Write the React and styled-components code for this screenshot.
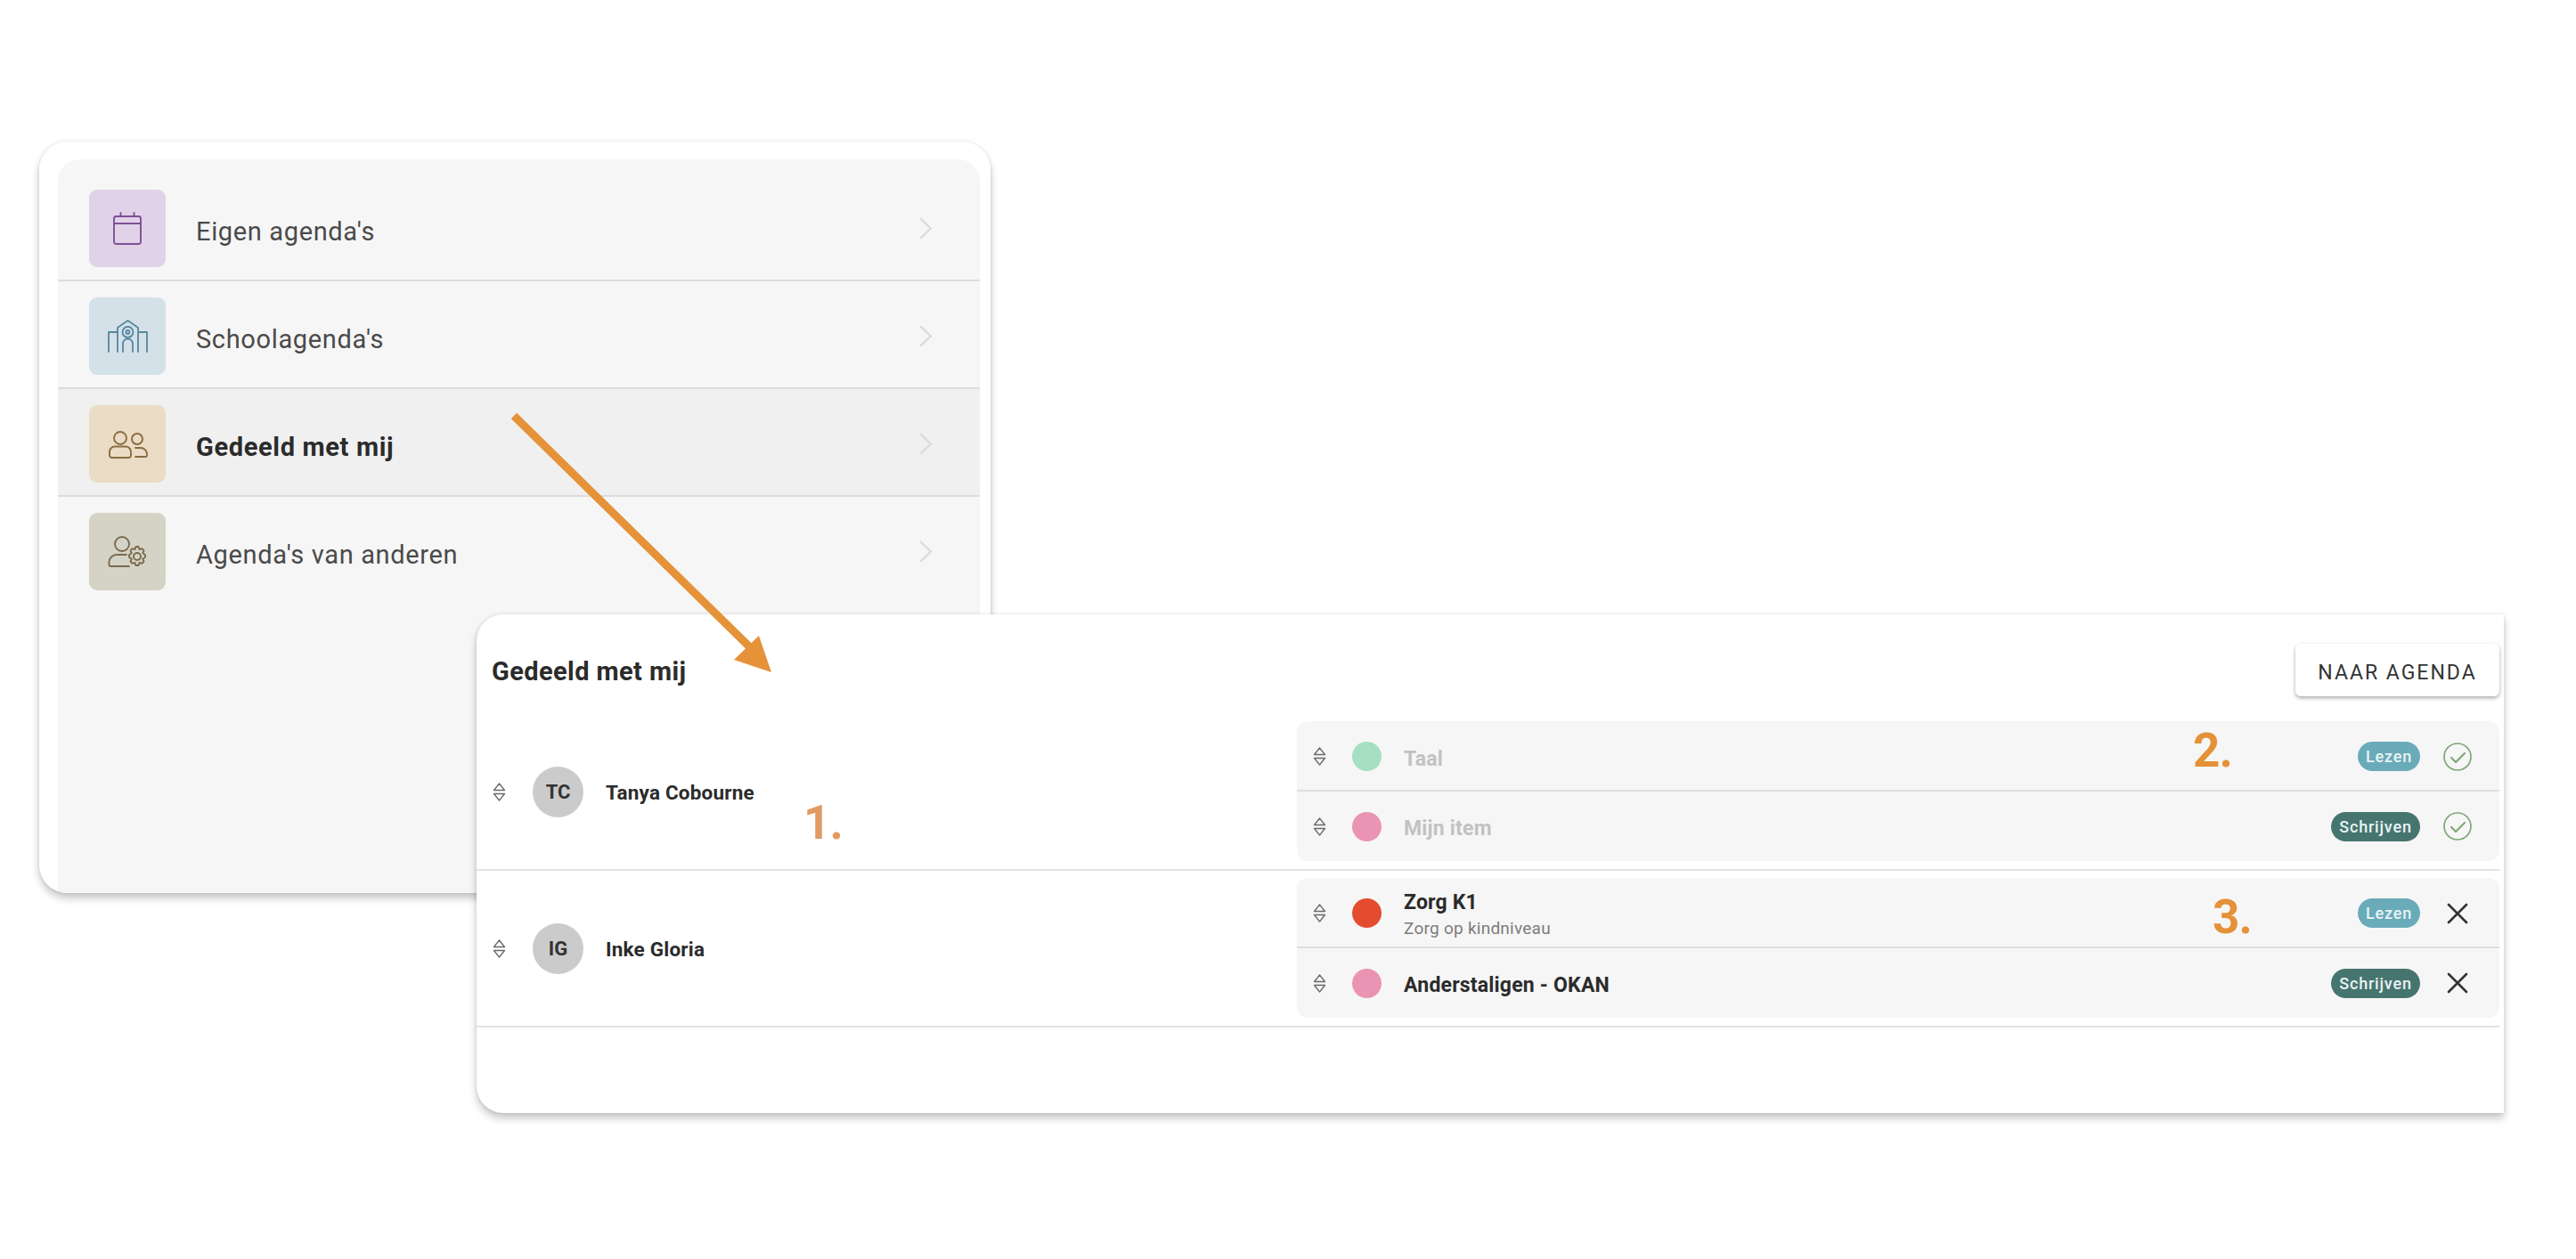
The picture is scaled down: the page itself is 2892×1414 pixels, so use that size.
import React from "react";
import styled, { createGlobalStyle } from "styled-components";

const Global = createGlobalStyle`
  html, body { margin: 0; padding: 0; background: #fff; }
  body { font-family: Roboto, "Liberation Sans", sans-serif; color: #2b2b2b; }
`;

const Canvas = styled.div`
  position: relative;
  width: 2892px;
  height: 1414px;
  overflow: hidden;
  background: #fff;
  padding: 159px 0 0 44px;
  box-sizing: border-box;
`;

const MenuCard = styled.section`
  width: 1068px;
  height: 844px;
  box-sizing: border-box;
  padding: 20px 12px 0 21px;
  background: #fff;
  border-radius: 32px;
  overflow: hidden;
`;

const MenuShadow = styled.div`
  width: 1068px;
  border-radius: 32px;
  box-shadow: 0 6px 10px rgba(0, 0, 0, 0.22), 0 0 4px rgba(0, 0, 0, 0.1);
`;

const MenuPanel = styled.ul`
  list-style: none;
  margin: 0;
  padding: 0;
  height: 100%;
  background: #f6f6f6;
  border-radius: 24px 24px 0 0;
`;

const MenuRow = styled.li`
  display: flex;
  align-items: center;
  box-sizing: border-box;
  padding: ${(p) => (p.$first ? "34px" : "18px")} 53px 14px 35px;
  border-bottom: ${(p) => (p.$last ? "none" : "2px solid #dcdcdc")};
  background: ${(p) => (p.$active ? "#f0f0f0" : "transparent")};
`;

const Tile = styled.span`
  flex: none;
  display: flex;
  align-items: center;
  justify-content: center;
  width: 86px;
  height: 87px;
  border-radius: 9px;
  background: ${(p) => p.$bg};
  color: ${(p) => p.$fg};
`;

const MenuLabel = styled.span`
  flex: 1;
  margin: 6px 0 0 34px;
  font-size: 29px;
  letter-spacing: 0.65px;
  font-weight: ${(p) => (p.$active ? 700 : 400)};
  color: ${(p) => (p.$active ? "#2b2b2b" : "#4a4a4a")};
`;

const Chevron = styled.svg`
  flex: none;
  width: 15px;
  height: 25px;
  color: #dadada;
`;

const SharedCard = styled.section`
  position: absolute;
  left: 535px;
  top: 690px;
  width: 2276px;
  height: 560px;
  box-sizing: border-box;
  padding: 33px 5px 0 0;
  background: #fff;
  border-radius: 30px 0 0 30px;
  box-shadow: 0 6px 10px rgba(0, 0, 0, 0.22), 0 0 4px rgba(0, 0, 0, 0.1);
`;

const Header = styled.header`
  display: flex;
  align-items: center;
  justify-content: space-between;
  height: 59px;
  padding-left: 17px;
  margin-bottom: 28px;
`;

const Title = styled.h2`
  margin: 3px 0 0;
  font-size: 29px;
  font-weight: 700;
  letter-spacing: 0.4px;
  color: #2b2b2b;
`;

const ActionButton = styled.button`
  width: 229px;
  height: 59px;
  padding: 5px 0 0;
  border: none;
  border-radius: 6px;
  background: #fff;
  box-shadow: 0 2px 4px rgba(0, 0, 0, 0.35);
  font-family: inherit;
  font-size: 23px;
  letter-spacing: 2px;
  color: #333;
`;

const PersonRow = styled.div`
  display: flex;
  align-items: stretch;
  padding-bottom: 9px;
  margin-bottom: 8px;
  border-bottom: 2px solid #e4e4e4;
`;

const Person = styled.div`
  display: flex;
  align-items: center;
  width: 921px;
  padding: 1px 0 0 18px;
  box-sizing: border-box;
`;

const Handle = styled.svg`
  flex: none;
  width: 15px;
  height: 21px;
  color: #6a6a6a;
`;

const Avatar = styled.span`
  flex: none;
  display: flex;
  align-items: center;
  justify-content: center;
  width: 57px;
  height: 57px;
  margin: 0 25px 0 30px;
  border-radius: 50%;
  background: #cbcbcb;
  font-size: 22px;
  font-weight: 700;
  color: #333;
`;

const PersonName = styled.span`
  margin-top: 2px;
  font-size: 22.5px;
  font-weight: 700;
  letter-spacing: 0.2px;
  color: #2b2b2b;
`;

const ItemPanel = styled.div`
  flex: 1;
  background: #f6f6f6;
  border-radius: 12px;
`;

const Item = styled.div`
  display: flex;
  align-items: center;
  box-sizing: border-box;
  padding: ${(p) => (p.$last ? "0" : "2px")} 31px 0 18px;
  height: ${(p) => (p.$last ? "78px" : "79px")};
  border-bottom: ${(p) => (p.$last ? "none" : "2px solid #dedede")};
`;

const Dot = styled.span`
  flex: none;
  width: 33px;
  height: 33px;
  margin: 0 25px 0 29px;
  border-radius: 50%;
  background: ${(p) => p.$color};
`;

const ItemText = styled.div`
  flex: 1;
  display: flex;
  flex-direction: column;
  padding-top: ${(p) => (p.$single ? "5px" : "3px")};
`;

const ItemName = styled.span`
  font-size: 23px;
  font-weight: 700;
  letter-spacing: 0.2px;
  line-height: 27px;
  color: ${(p) => (p.$muted ? "#c2c2c2" : "#2b2b2b")};
`;

const ItemSub = styled.span`
  margin-top: 3px;
  font-size: 19px;
  letter-spacing: 0.25px;
  line-height: 25px;
  color: #7c7c7c;
`;

const Badge = styled.span`
  flex: none;
  display: flex;
  align-items: center;
  justify-content: center;
  height: 33px;
  width: ${(p) => p.$w}px;
  border-radius: 17px;
  background: ${(p) => p.$bg};
  font-size: 18px;
  font-weight: 500;
  letter-spacing: 0.8px;
  color: #e9f3f3;
`;

const StateIcon = styled.svg`
  flex: none;
  width: 32px;
  height: 32px;
  margin-left: 26px;
  color: ${(p) => p.$color};
`;

const Marker = styled.span`
  position: absolute;
  left: ${(p) => p.$x}px;
  top: ${(p) => p.$y}px;
  font-size: 53px;
  line-height: 53px;
  font-weight: 700;
  letter-spacing: -1px;
  color: ${(p) => p.$color};
`;

const Overlay = styled.svg`
  position: absolute;
  left: 0;
  top: 0;
  pointer-events: none;
`;

const strokeProps = { fill: "none", stroke: "currentColor", strokeLinecap: "round", strokeLinejoin: "round" };

const CalendarIcon = () => (
  <svg width="32" height="37" viewBox="0 0 32 37" {...strokeProps} strokeWidth="1.9">
    <rect x="1" y="5" width="30" height="31" rx="2.5" />
    <path d="M1 13h30M8.500 1v4M23.500 1v4" />
  </svg>
);

const SchoolIcon = () => (
  <svg width="45" height="37" viewBox="0 0 45 37" {...strokeProps} strokeWidth="1.8">
    <path d="M1 36V14h10M11 36V9L22.500 1 34 9v27M34 14h10v22" />
    <circle cx="22.500" cy="14" r="6" />
    <circle cx="22.500" cy="14" r="2" />
    <path d="M17 36v-9a5.500 5.500 0 0 1 11 0v9" />
  </svg>
);

const PeopleIcon = () => (
  <svg width="45" height="32" viewBox="0 0 45 32" {...strokeProps} strokeWidth="1.9">
    <circle cx="14" cy="9" r="7" />
    <path d="M8 18.500h12a6 6 0 0 1 6 6v4a2.500 2.500 0 0 1-2.500 2.500h-19A2.500 2.500 0 0 1 2 28.500v-4a6 6 0 0 1 6-6z" />
    <circle cx="33" cy="10" r="6" />
    <path d="M31 20h6a7 7 0 0 1 7 7v1.500a1.500 1.500 0 0 1-1.500 1.500H31" />
  </svg>
);

const PersonGearIcon = () => (
  <svg width="45" height="36" viewBox="0 0 45 36" {...strokeProps} strokeWidth="1.9">
    <circle cx="16" cy="9" r="8" />
    <path d="M21 21H10a8.500 8.500 0 0 0-8.500 8.500V32a2 2 0 0 0 2 2H24" />
    <g transform="translate(0 -7)">
      <path d="M31.500 19h3l1 3 3-.8 2 2.200-1.200 2.800 2.700 2v2.600l-2.700 2 1.200 2.800-2 2.200-3-.8-1 3h-3l-1-3-3 .8-2-2.200 1.200-2.800-2.700-2v-2.600l2.700-2-1.200-2.800 2-2.200 3 .8z" />
      <circle cx="33" cy="30" r="4" />
    </g>
  </svg>
);

const HandleIcon = () => (
  <Handle viewBox="0 0 15 21" fill="none" stroke="currentColor" strokeWidth="1.3" strokeLinejoin="round">
    <path d="M7.500 1L13.500 8.500H1.500zM1.500 12.500h12L7.500 20z" />
  </Handle>
);

const CheckIcon = () => (
  <StateIcon $color="#7fa877" viewBox="0 0 32 32" fill="none" stroke="currentColor" strokeWidth="1.7" strokeLinecap="round" strokeLinejoin="round">
    <circle cx="16" cy="16" r="15" />
    <path d="M9 17l5 5 10-10" strokeWidth="2.2" />
  </StateIcon>
);

const CloseIcon = () => (
  <StateIcon $color="#333" viewBox="0 0 32 32" fill="none" stroke="currentColor" strokeWidth="2.6" strokeLinecap="round">
    <path d="M6 6l20 20M26 6L6 26" />
  </StateIcon>
);

const menu = [
  { label: "Eigen agenda's", bg: "#e1d2e8", fg: "#7d5195", Icon: CalendarIcon },
  { label: "Schoolagenda's", bg: "#d4e1e9", fg: "#55879f", Icon: SchoolIcon },
  { label: "Gedeeld met mij", bg: "#eadcc5", fg: "#8a6c3f", Icon: PeopleIcon, active: true },
  { label: "Agenda's van anderen", bg: "#d5d3c5", fg: "#7a6a4f", Icon: PersonGearIcon },
];

const people = [
  {
    initials: "TC",
    name: "Tanya Cobourne",
    items: [
      { name: "Taal", color: "#a5e0c2", badge: "Lezen", muted: true },
      { name: "Mijn item", color: "#ea93b3", badge: "Schrijven", muted: true },
    ],
    state: "check",
  },
  {
    initials: "IG",
    name: "Inke Gloria",
    items: [
      { name: "Zorg K1", sub: "Zorg op kindniveau", color: "#e34c2f", badge: "Lezen" },
      { name: "Anderstaligen - OKAN", color: "#ea93b3", badge: "Schrijven" },
    ],
    state: "close",
  },
];

const badgeStyle = {
  Lezen: { bg: "#6aabba", w: 70 },
  Schrijven: { bg: "#467570", w: 100 },
};

export default function App() {
  return (
    <Canvas>
      <Global />
      <MenuShadow>
        <MenuCard>
          <MenuPanel>
            {menu.map(({ label, bg, fg, Icon, active }, i) => (
              <MenuRow key={label} $active={active} $first={i === 0} $last={i === menu.length - 1}>
                <Tile $bg={bg} $fg={fg}>
                  <Icon />
                </Tile>
                <MenuLabel $active={active}>{label}</MenuLabel>
                <Chevron viewBox="0 0 15 25" fill="none" stroke="currentColor" strokeWidth="2.4" strokeLinecap="round" strokeLinejoin="round">
                  <path d="M2 2l11 10.500L2 23" />
                </Chevron>
              </MenuRow>
            ))}
          </MenuPanel>
        </MenuCard>
      </MenuShadow>

      <SharedCard>
        <Header>
          <Title>Gedeeld met mij</Title>
          <ActionButton>NAAR AGENDA</ActionButton>
        </Header>
        {people.map((person) => (
          <PersonRow key={person.name}>
            <Person>
              <HandleIcon />
              <Avatar>{person.initials}</Avatar>
              <PersonName>{person.name}</PersonName>
            </Person>
            <ItemPanel>
              {person.items.map((item, i) => (
                <Item key={item.name} $last={i === person.items.length - 1}>
                  <HandleIcon />
                  <Dot $color={item.color} />
                  <ItemText $single={!item.sub}>
                    <ItemName $muted={item.muted}>{item.name}</ItemName>
                    {item.sub && <ItemSub>{item.sub}</ItemSub>}
                  </ItemText>
                  <Badge $bg={badgeStyle[item.badge].bg} $w={badgeStyle[item.badge].w}>
                    {item.badge}
                  </Badge>
                  {person.state === "check" ? <CheckIcon /> : <CloseIcon />}
                </Item>
              ))}
            </ItemPanel>
          </PersonRow>
        ))}
      </SharedCard>

      <Marker $x={902} $y={898} $color="#e09a62">1.</Marker>
      <Marker $x={2462} $y={817} $color="#e59138">2.</Marker>
      <Marker $x={2484} $y={1004} $color="#e59138">3.</Marker>

      <Overlay width="2892" height="1414" viewBox="0 0 2892 1414">
        <path d="M577 467L842 727" stroke="#e59238" strokeWidth="9" fill="none" />
        <path d="M866 755L852 714L824 741z" fill="#e59238" />
      </Overlay>
    </Canvas>
  );
}
